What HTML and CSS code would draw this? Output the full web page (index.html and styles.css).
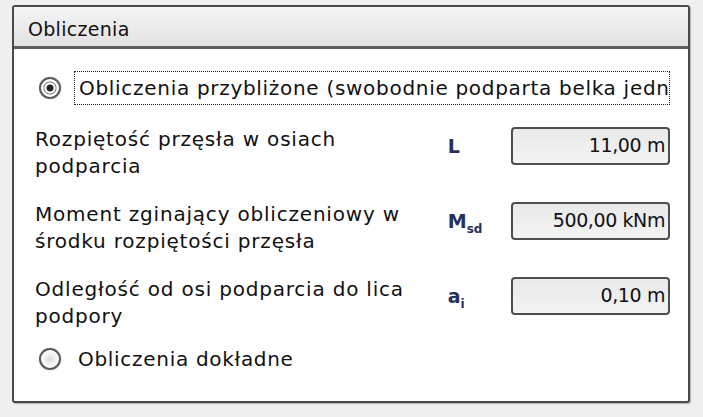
FILE: index.html
```html
<!DOCTYPE html>
<html lang="pl">
<head>
  <meta charset="UTF-8" />
  <title>Obliczenia</title>
  <link rel="stylesheet" href="styles.css">
</head>
<body>
  <div class="panel">
    <div class="panel-header">Obliczenia</div>
    <div class="panel-body">
      <div class="opcja">
        <span class="radio zaznaczone"></span>
        <span class="opcja-tekst fokus">Obliczenia przybliżone (swobodnie podparta belka jedn</span>
      </div>

      <div class="wiersz">
        <div class="etykieta">Rozpiętość przęsła w osiach<br>podparcia</div>
        <div class="symbol">L</div>
        <div class="pole">11,00 m</div>
      </div>

      <div class="wiersz">
        <div class="etykieta">Moment zginający obliczeniowy w<br>środku rozpiętości przęsła</div>
        <div class="symbol">M<sub>sd</sub></div>
        <div class="pole">500,00 kNm</div>
      </div>

      <div class="wiersz">
        <div class="etykieta">Odległość od osi podparcia do lica<br>podpory</div>
        <div class="symbol">a<sub>i</sub></div>
        <div class="pole">0,10 m</div>
      </div>

      <div class="opcja dolna">
        <span class="radio"></span>
        <span class="opcja-tekst">Obliczenia dokładne</span>
      </div>
    </div>
  </div>
</body>
</html>
```

FILE: styles.css
```css
body {
  margin: 0;
  padding: 5px 0 0 12px;
  background: #efefef;
  font-family: 'DejaVu Sans', sans-serif;
  font-size: 20px;
  color: #111;
  height: 412px;
  box-sizing: border-box;
}

.panel {
  width: 678px;
  height: 398px;
  box-sizing: border-box;
  border: 2px solid #4a4a4a;
  border-radius: 3px;
  background: #fff;
  box-shadow: 1px 1px 1px rgba(0,0,0,0.25);
}

.panel-header {
  height: 42px;
  box-sizing: border-box;
  padding: 11px 0 0 14px;
  background: linear-gradient(#f4f4f4, #e2e2e2);
  border-bottom: 3px solid #5e5e5e;
  font-size: 19px;
  letter-spacing: 0.3px;
}

.panel-body {
  padding: 22px 18px 0 25px;
}

.opcja {
  display: flex;
  align-items: center;
  height: 34px;
}

.radio {
  width: 18px;
  height: 18px;
  border: 2px solid #5a5a5a;
  border-radius: 50%;
  background: radial-gradient(circle, #ddd 0, #fff 70%);
  box-shadow: 0 0 1px #888;
  flex-shrink: 0;
  margin-right: 13px;
}

.radio.zaznaczone {
  background: radial-gradient(circle, #222 0, #222 3px, #fff 4px, #fff 5px, #777 6px, #fff 7px);
}

.opcja-tekst {
  padding: 2px 4px;
  white-space: nowrap;
  overflow: hidden;
  letter-spacing: 0.7px;
}

.fokus {
  border: 1px dotted #222;
  width: 597px;
  height: 34px;
  box-sizing: border-box;
  line-height: 28px;
}

.wiersz {
  display: flex;
  align-items: flex-start;
  margin-top: 21px;
}

.etykieta {
  width: 404px;
  line-height: 27px;
  margin-left: -4px;
  letter-spacing: 0.8px;
}

.symbol {
  width: 63px;
  padding-left: 10px;
  margin-top: 9px;
  color: #26305a;
  font-weight: bold;
  font-size: 19px;
}

.symbol sub {
  font-size: 12px;
}

.pole {
  width: 160px;
  height: 38px;
  box-sizing: border-box;
  margin-top: 1px;
  border: 2px solid #4e4e4e;
  border-radius: 4px;
  background: linear-gradient(#e9e9e9, #f3f3f3);
  text-align: right;
  padding: 5px 3px 0 0;
  font-size: 19px;
  letter-spacing: -0.4px;
}

.opcja.dolna {
  margin-top: 12px;
}
```
